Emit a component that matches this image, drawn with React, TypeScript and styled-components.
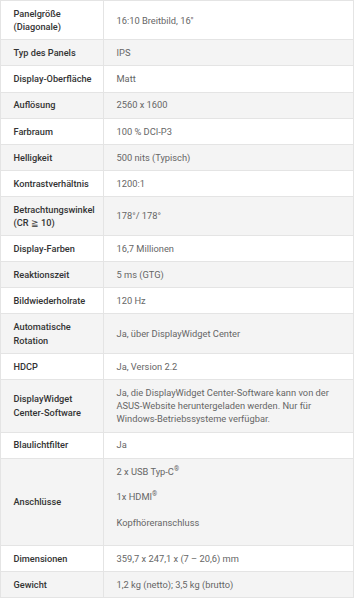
import styled, { createGlobalStyle } from 'styled-components'

const GlobalStyle = createGlobalStyle`
  body {
    margin: 0;
    background: #fff;
    font-family: Roboto, 'Liberation Sans', Arial, sans-serif;
  }
`

const SpecTable = styled.table`
  width: 354px;
  border-collapse: collapse;
  table-layout: fixed;
  font-size: 9.3px;
  line-height: 13.3px;
`

const Row = styled.tr`
  background: #fff;

  &:nth-child(even) {
    background: #f4f4f4;
  }
`

// width is the content box: 103px column minus padding and border
const Label = styled.th`
  width: 83.5px;
  padding: 5.9px 6px 5.9px 12.5px;
  border: 1px solid #e4e4e4;
  text-align: left;
  vertical-align: middle;
  font-size: 9.2px;
  font-weight: 500;
  color: #333;
`

const Value = styled.td`
  padding: 5.9px 16px 5.9px 12.5px;
  border: 1px solid #e4e4e4;
  vertical-align: middle;
  color: #666;
`

const Para = styled.p<{ $last?: boolean }>`
  margin: 0 0 ${({ $last }) => ($last ? '10px' : '12.5px')};
`

const Sup = styled.sup`
  font-size: 0.7em;
  line-height: 0;
`

type Spec = { label: string; value: React.ReactNode }

const specs: Spec[] = [
  { label: 'Panelgröße (Diagonale)', value: '16:10 Breitbild, 16″' },
  { label: 'Typ des Panels', value: 'IPS' },
  { label: 'Display-Oberfläche', value: 'Matt' },
  { label: 'Auflösung', value: '2560 x 1600' },
  { label: 'Farbraum', value: '100 % DCI-P3' },
  { label: 'Helligkeit', value: '500 nits (Typisch)' },
  { label: 'Kontrastverhältnis', value: '1200:1' },
  { label: 'Betrachtungswinkel (CR ≧ 10)', value: '178°/ 178°' },
  { label: 'Display-Farben', value: '16,7 Millionen' },
  { label: 'Reaktionszeit', value: '5 ms (GTG)' },
  { label: 'Bildwiederholrate', value: '120 Hz' },
  { label: 'Automatische Rotation', value: 'Ja, über DisplayWidget Center' },
  { label: 'HDCP', value: 'Ja, Version 2.2' },
  {
    label: 'DisplayWidget Center-Software',
    value:
      'Ja, die DisplayWidget Center-Software kann von der ASUS-Website heruntergeladen werden. Nur für Windows-Betriebssysteme verfügbar.',
  },
  { label: 'Blaulichtfilter', value: 'Ja' },
  {
    label: 'Anschlüsse',
    value: (
      <>
        <Para>
          2 x USB Typ-C<Sup>®</Sup>
        </Para>
        <Para>
          1x HDMI<Sup>®</Sup>
        </Para>
        <Para $last>Kopfhöreranschluss</Para>
      </>
    ),
  },
  { label: 'Dimensionen', value: '359,7 x 247,1 x (7 – 20,6) mm' },
  { label: 'Gewicht', value: '1,2 kg (netto); 3,5 kg (brutto)' },
]

export default function App() {
  return (
    <>
      <GlobalStyle />
      <SpecTable>
        <tbody>
          {specs.map((spec) => (
            <Row key={spec.label}>
              <Label>{spec.label}</Label>
              <Value>{spec.value}</Value>
            </Row>
          ))}
        </tbody>
      </SpecTable>
    </>
  )
}
